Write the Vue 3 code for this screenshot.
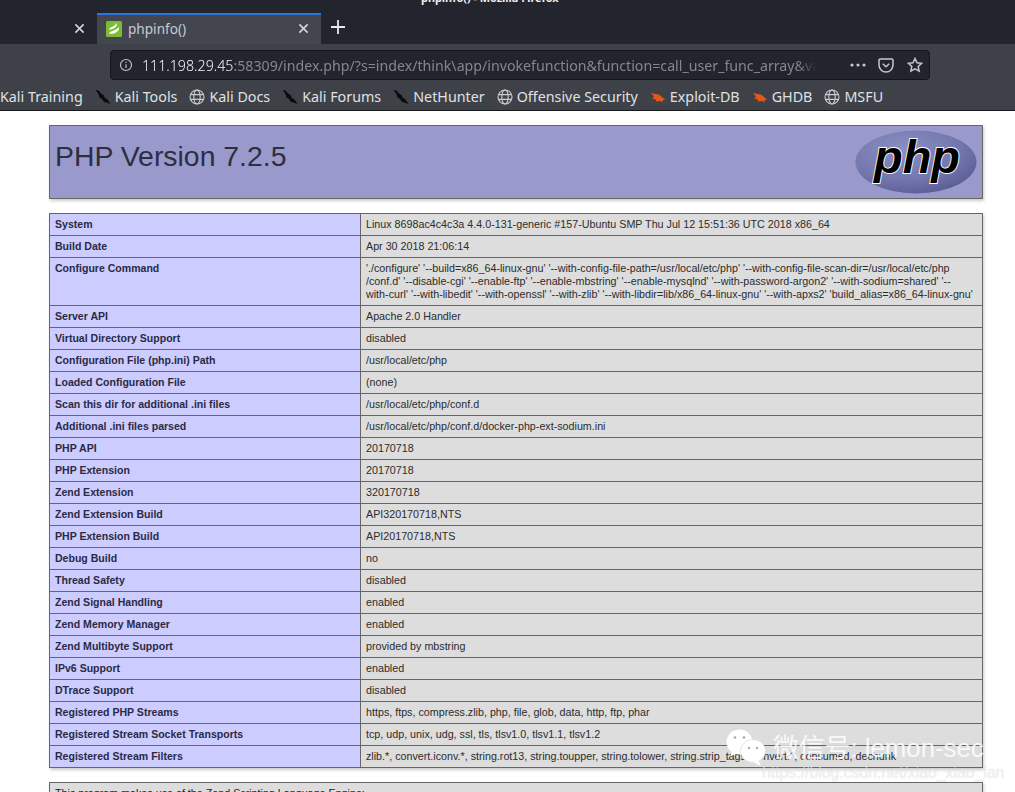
<script setup>
const bookmarks = [
  { label: 'Kali Training', icon: 'none' },
  { label: 'Kali Tools', icon: 'dragon' },
  { label: 'Kali Docs', icon: 'globe' },
  { label: 'Kali Forums', icon: 'dragon' },
  { label: 'NetHunter', icon: 'dragon' },
  { label: 'Offensive Security', icon: 'globe' },
  { label: 'Exploit-DB', icon: 'bug' },
  { label: 'GHDB', icon: 'bug' },
  { label: 'MSFU', icon: 'globe' }
]
const rows = [
  ['System', 'Linux 8698ac4c4c3a 4.4.0-131-generic #157-Ubuntu SMP Thu Jul 12 15:51:36 UTC 2018 x86_64'],
  ['Build Date', 'Apr 30 2018 21:06:14'],
  ['Configure Command', "'./configure' '--build=x86_64-linux-gnu' '--with-config-file-path=/usr/local/etc/php' '--with-config-file-scan-dir=/usr/local/etc/php\n/conf.d' '--disable-cgi' '--enable-ftp' '--enable-mbstring' '--enable-mysqlnd' '--with-password-argon2' '--with-sodium=shared' '--\nwith-curl' '--with-libedit' '--with-openssl' '--with-zlib' '--with-libdir=lib/x86_64-linux-gnu' '--with-apxs2' 'build_alias=x86_64-linux-gnu'"],
  ['Server API', 'Apache 2.0 Handler'],
  ['Virtual Directory Support', 'disabled'],
  ['Configuration File (php.ini) Path', '/usr/local/etc/php'],
  ['Loaded Configuration File', '(none)'],
  ['Scan this dir for additional .ini files', '/usr/local/etc/php/conf.d'],
  ['Additional .ini files parsed', '/usr/local/etc/php/conf.d/docker-php-ext-sodium.ini'],
  ['PHP API', '20170718'],
  ['PHP Extension', '20170718'],
  ['Zend Extension', '320170718'],
  ['Zend Extension Build', 'API320170718,NTS'],
  ['PHP Extension Build', 'API20170718,NTS'],
  ['Debug Build', 'no'],
  ['Thread Safety', 'disabled'],
  ['Zend Signal Handling', 'enabled'],
  ['Zend Memory Manager', 'enabled'],
  ['Zend Multibyte Support', 'provided by mbstring'],
  ['IPv6 Support', 'enabled'],
  ['DTrace Support', 'disabled'],
  ['Registered PHP Streams', 'https, ftps, compress.zlib, php, file, glob, data, http, ftp, phar'],
  ['Registered Stream Socket Transports', 'tcp, udp, unix, udg, ssl, tls, tlsv1.0, tlsv1.1, tlsv1.2'],
  ['Registered Stream Filters', 'zlib.*, convert.iconv.*, string.rot13, string.toupper, string.tolower, string.strip_tags, convert.*, consumed, dechunk']
]
</script>

<template>
  <div class="screen">
    <header class="chrome">
      <div class="tabstrip">
        <div class="wintitle">phpinfo() - Mozilla Firefox</div>
        <div class="tabs">
          <div class="tab-bg">
            <svg class="x" viewBox="0 0 12 12"><path d="M1.5 1.5l9 9M10.5 1.5l-9 9" /></svg>
          </div>
          <div class="tab">
            <svg class="fav" viewBox="0 0 16 16">
              <rect width="16" height="16" rx="1.5" fill="#7dbb32" />
              <path d="M3 8.500C4 5.500 9 6 10.500 2c1 2.500-.5 4.500-3 5.500S4 9 3 8.500zM3 12.500C4 9.500 10 10 13 6c.5 3-1.500 5-4 6s-4.500 1-6 .5z" fill="#fff" />
            </svg>
            <span class="tab-label">phpinfo()</span>
            <svg class="x" viewBox="0 0 12 12"><path d="M1.5 1.500l9 9M10.500 1.500l-9 9" /></svg>
          </div>
          <svg class="plus" viewBox="0 0 14 14"><path d="M7 0v14M0 7h14" /></svg>
        </div>
      </div>
      <div class="toolbar">
        <div class="urlbar">
          <svg class="info" viewBox="0 0 16 16">
            <circle cx="8" cy="8" r="6.300" />
            <path d="M8 7v4.500M8 4.300v1.400" />
          </svg>
          <div class="url"><span class="host">111.198.29.45</span>:58309/index.php/?s=index/think\app/invokefunction&amp;function=call_user_func_array&amp;va</div>
          <div class="url-actions">
            <svg class="dots" viewBox="0 0 16 4"><circle cx="2" cy="2" r="1.600" /><circle cx="8" cy="2" r="1.600" /><circle cx="14" cy="2" r="1.600" /></svg>
            <svg class="pocket" viewBox="0 0 16 15"><path d="M2.300 1h11.400c.7 0 1.300.6 1.300 1.300V7c0 3.800-3.100 7-7 7s-7-3.200-7-7V2.300C1 1.600 1.600 1 2.300 1z" /><path d="M4.800 5.800L8 8.800l3.200-3" /></svg>
            <svg class="star" viewBox="0 0 16 16"><path d="M8 1.500l2 4.200 4.600.6-3.400 3.200.9 4.600L8 11.800l-4.100 2.300.9-4.600-3.400-3.200 4.600-.6z" /></svg>
          </div>
        </div>
      </div>
      <nav class="bookmarks">
        <div v-for="b in bookmarks" :key="b.label" class="bm">
          <svg v-if="b.icon === 'dragon'" class="bm-icon" viewBox="0 0 16 16">
            <path d="M0.500 1L3.500 1.500 6 4.500 8.500 6 10 9l2.500 1.500L15.500 15l-4-1.500L9 13 7 10 4.500 8.500 3.500 5z" fill="#0b0b0c" />
          </svg>
          <svg v-else-if="b.icon === 'globe'" class="bm-icon globe" viewBox="0 0 16 16">
            <circle cx="8" cy="8" r="7" />
            <ellipse cx="8" cy="8" rx="3.200" ry="7" />
            <path d="M1 5.600h14M1 10.400h14" />
          </svg>
          <svg v-else-if="b.icon === 'bug'" class="bm-icon" viewBox="0 0 16 16">
            <path d="M1 3.500l4 1.500c3-.5 6 1.500 8 4l2.500 1.500-2.500.5-1 2.500-1.500-1.500-4 .5-1-2L2 9.500l2-1.500z" fill="#e2571a" />
          </svg>
          <span>{{ b.label }}</span>
        </div>
      </nav>
    </header>

    <main class="page">
      <div class="center">
        <table class="head-table">
          <tbody>
            <tr>
              <td class="h">
                <svg class="php-logo" viewBox="0 0 122 64">
                  <defs>
                    <radialGradient id="phpGrad" cx="0.38" cy="0.3" r="0.8">
                      <stop offset="0" stop-color="#8a8fc2" />
                      <stop offset="0.6" stop-color="#7377ad" />
                      <stop offset="1" stop-color="#54588f" />
                    </radialGradient>
                  </defs>
                  <ellipse cx="61" cy="32" rx="60.500" ry="31.500" fill="url(#phpGrad)" />
                  <text x="62" y="43" class="php-word">php</text>
                </svg>
                <h1>PHP Version 7.2.5</h1>
              </td>
            </tr>
          </tbody>
        </table>
        <table class="info-table">
          <tbody>
            <tr v-for="r in rows" :key="r[0]">
              <td class="e">{{ r[0] }}</td>
              <td class="v">{{ r[1] }}</td>
            </tr>
          </tbody>
        </table>
        <div class="zend">This program makes use of the Zend Scripting Language Engine:</div>
      </div>

      <div class="marks">
        <svg class="wechat" viewBox="0 0 40 40">
          <ellipse cx="13.500" cy="13" rx="13" ry="12.500" fill="#fff" />
          <path d="M6 21l-1.500 6 7-3z" fill="#fff" />
          <ellipse cx="27" cy="22" rx="12.500" ry="11.500" fill="#fff" stroke="#d4d4d4" stroke-width=".6" />
          <path d="M32 31l3 6-7-3.500z" fill="#fff" />
          <circle cx="9" cy="8.500" r="1.300" fill="#aaa" />
          <circle cx="18" cy="8.500" r="1.300" fill="#aaa" />
          <circle cx="23" cy="19" r="1.200" fill="#aaa" />
          <circle cx="31" cy="19" r="1.200" fill="#aaa" />
        </svg>
        <div class="wm1">微信号: lemon-sec</div>
        <div class="wm2">https://blog.csdn.net/xiao_xiao_lan</div>
      </div>
    </main>
  </div>
</template>

<style>
html, body { margin: 0; background: #fff; overflow: hidden; }
</style>

<style scoped>
.screen { width: 1015px; height: 792px; overflow: hidden; display: flex; flex-direction: column; font-family: "Liberation Sans", Arial, sans-serif; }
.chrome { flex: none; font-family: "Noto Sans", sans-serif; color: #e6e7ea; border-bottom: 1px solid #17181c; }
.tabstrip { height: 44px; background: #23252e; position: relative; box-sizing: border-box; padding-top: 13px; }
.wintitle { position: absolute; top: -9px; left: 421px; font: bold 10.900px/14px "Noto Sans", sans-serif; color: #f0f0f0; white-space: nowrap; }
.tabs { display: flex; align-items: stretch; height: 31px; }
.tab-bg { width: 97px; box-sizing: border-box; display: flex; align-items: center; justify-content: flex-end; padding: 0 12px 0 0; }
.tab { width: 224px; box-sizing: border-box; background: #43464e; border-top: 2px solid #2a74de; display: flex; align-items: center; padding: 0 12px 2px 9px; }
.fav { width: 16px; height: 16px; flex: none; margin-right: 6px; }
.tab-label { flex: 1; font-size: 13.600px; color: #c8ccd2; }
.x { width: 11px; height: 11px; fill: none; stroke: #d4d6da; stroke-width: 1.700; flex: none; }
.plus { width: 14px; height: 14px; fill: none; stroke: #e8e9eb; stroke-width: 1.800; align-self: center; margin: 0 0 3px 10px; }
.toolbar { height: 40px; background: #3f4148; box-sizing: border-box; padding: 6px 85px 4px 110px; }
.urlbar { height: 30px; box-sizing: border-box; background: #23252e; border: 1px solid #14151a; border-radius: 4px; display: flex; align-items: center; padding: 0 6px 0 8px; }
.info { width: 14px; height: 14px; fill: none; stroke: #c3c5c9; stroke-width: 1.300; flex: none; margin-right: 9px; }
.url { width: 675px; flex: none; font-size: 14.200px; color: #85878d; white-space: nowrap; overflow: hidden; -webkit-mask-image: linear-gradient(to right, #000 97%, transparent); mask-image: linear-gradient(to right, #000 97%, transparent); }
.host { color: #f4f5f6; font-weight: 300; }
.url-actions { display: flex; align-items: center; flex: none; margin-left: auto; }
.dots { width: 16px; height: 4px; fill: #c6c8cc; margin-right: 12px; }
.pocket { width: 16px; height: 15px; fill: none; stroke: #c6c8cc; stroke-width: 1.500; margin-right: 13px; }
.star { width: 16px; height: 16px; fill: none; stroke: #c6c8cc; stroke-width: 1.500; }
.bookmarks { height: 26px; background: #3f4148; display: flex; align-items: center; font-size: 14.300px; color: #dfe1e5; white-space: nowrap; gap: 12px; box-sizing: border-box; padding-bottom: 1px; }
.bm { display: flex; align-items: center; }
.bm-icon { width: 16px; height: 16px; flex: none; margin-right: 4px; }
.globe { fill: none; stroke: #c9cbcf; stroke-width: 1.100; }

.page { flex: 1; min-height: 0; background: #fff; color: #222; position: relative; overflow: hidden; padding-top: 14px; }
.center { width: 934px; margin-left: 49px; font-size: 10.720px; }
table { border-collapse: collapse; border: 0; width: 934px; box-shadow: 1px 2px 3px #ccc; table-layout: fixed; }
td { border: 1px solid #666; font-size: 10.720px; vertical-align: baseline; padding: 4px 5px; line-height: 13px; }
.head-table { margin-bottom: 14px; }
.h { background: #99c; height: 64px; vertical-align: top; padding: 4px 5px; }
h1 { margin: 0; font-size: 28.400px; font-weight: normal; line-height: 52px; color: #2e2e40; }
.php-logo { float: right; width: 122px; height: 64px; margin: 0 0 0 10px; }
.php-word { font: italic bold 47px "Liberation Sans", sans-serif; text-anchor: middle; fill: #000; stroke: #fff; stroke-width: 1.800; paint-order: stroke; }
.e { background: #ccf; width: 300px; font-weight: bold; font-size: 10.550px; color: #2a2a44; }
.v { background: #ddd; white-space: pre; color: #2c2c2c; overflow: hidden; }
.zend { margin-top: 14px; height: 40px; box-sizing: border-box; background: #ddd; border: 1px solid #666; padding: 4px 5px; line-height: 13px; box-shadow: 1px 2px 3px #ccc; }

.marks { position: absolute; inset: 0; pointer-events: none; }
.wechat { position: absolute; left: 726px; top: 618px; width: 40px; height: 40px; }
.wm1 { position: absolute; left: 773px; top: 620px; font: 25.800px/34px "Liberation Sans", "Noto Sans CJK SC", sans-serif; color: rgba(255,255,255,.85); white-space: nowrap; }
.wm2 { position: absolute; left: 762px; top: 652px; font: 15.800px/20px "Liberation Sans", sans-serif; color: rgba(255,255,255,.55); white-space: nowrap; text-shadow: 0 0 1px rgba(150,150,150,.35); }
</style>
